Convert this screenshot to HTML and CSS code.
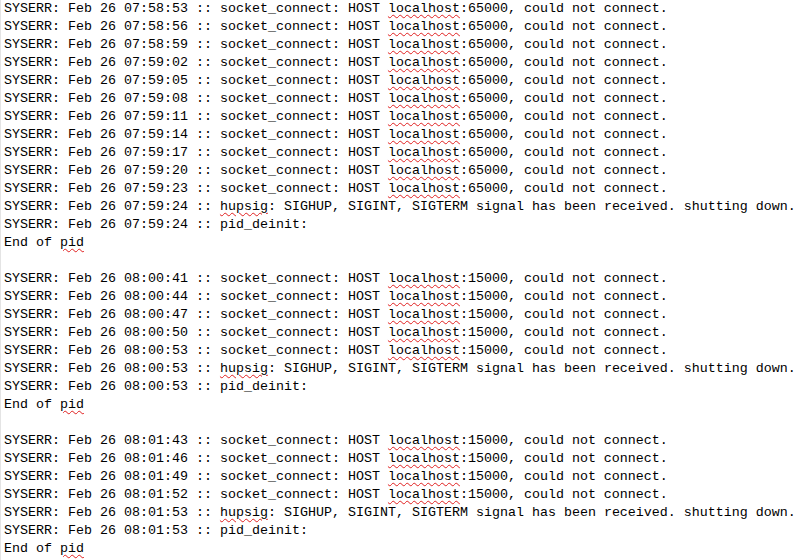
FILE: index.html
```html
<!DOCTYPE html>
<html>
<head>
<meta charset="utf-8">
<link rel="stylesheet" href="styles.css">
</head>
<body>
<pre class="log">SYSERR: Feb 26 07:58:53 :: socket_connect: HOST <span class="sp">localhost</span>:65000, could not connect.
SYSERR: Feb 26 07:58:56 :: socket_connect: HOST <span class="sp">localhost</span>:65000, could not connect.
SYSERR: Feb 26 07:58:59 :: socket_connect: HOST <span class="sp">localhost</span>:65000, could not connect.
SYSERR: Feb 26 07:59:02 :: socket_connect: HOST <span class="sp">localhost</span>:65000, could not connect.
SYSERR: Feb 26 07:59:05 :: socket_connect: HOST <span class="sp">localhost</span>:65000, could not connect.
SYSERR: Feb 26 07:59:08 :: socket_connect: HOST <span class="sp">localhost</span>:65000, could not connect.
SYSERR: Feb 26 07:59:11 :: socket_connect: HOST <span class="sp">localhost</span>:65000, could not connect.
SYSERR: Feb 26 07:59:14 :: socket_connect: HOST <span class="sp">localhost</span>:65000, could not connect.
SYSERR: Feb 26 07:59:17 :: socket_connect: HOST <span class="sp">localhost</span>:65000, could not connect.
SYSERR: Feb 26 07:59:20 :: socket_connect: HOST <span class="sp">localhost</span>:65000, could not connect.
SYSERR: Feb 26 07:59:23 :: socket_connect: HOST <span class="sp">localhost</span>:65000, could not connect.
SYSERR: Feb 26 07:59:24 :: <span class="sp">hupsig</span>: SIGHUP, SIGINT, SIGTERM signal has been received. shutting down.
SYSERR: Feb 26 07:59:24 :: pid_deinit:
End of <span class="sp">pid</span>

SYSERR: Feb 26 08:00:41 :: socket_connect: HOST <span class="sp">localhost</span>:15000, could not connect.
SYSERR: Feb 26 08:00:44 :: socket_connect: HOST <span class="sp">localhost</span>:15000, could not connect.
SYSERR: Feb 26 08:00:47 :: socket_connect: HOST <span class="sp">localhost</span>:15000, could not connect.
SYSERR: Feb 26 08:00:50 :: socket_connect: HOST <span class="sp">localhost</span>:15000, could not connect.
SYSERR: Feb 26 08:00:53 :: socket_connect: HOST <span class="sp">localhost</span>:15000, could not connect.
SYSERR: Feb 26 08:00:53 :: <span class="sp">hupsig</span>: SIGHUP, SIGINT, SIGTERM signal has been received. shutting down.
SYSERR: Feb 26 08:00:53 :: pid_deinit:
End of <span class="sp">pid</span>

SYSERR: Feb 26 08:01:43 :: socket_connect: HOST <span class="sp">localhost</span>:15000, could not connect.
SYSERR: Feb 26 08:01:46 :: socket_connect: HOST <span class="sp">localhost</span>:15000, could not connect.
SYSERR: Feb 26 08:01:49 :: socket_connect: HOST <span class="sp">localhost</span>:15000, could not connect.
SYSERR: Feb 26 08:01:52 :: socket_connect: HOST <span class="sp">localhost</span>:15000, could not connect.
SYSERR: Feb 26 08:01:53 :: <span class="sp">hupsig</span>: SIGHUP, SIGINT, SIGTERM signal has been received. shutting down.
SYSERR: Feb 26 08:01:53 :: pid_deinit:
End of <span class="sp">pid</span></pre>
</body>
</html>
```

FILE: styles.css
```css
html, body {
  margin: 0;
  padding: 0;
  background: #ffffff;
  height: 100%;
  overflow: hidden;
}

body {
  border-left: 1px solid #e4e4e4;
}

.log {
  margin: 0;
  padding: 0 0 0 3px;
  font-family: "Liberation Mono", "Courier New", monospace;
  font-size: 13.333px;
  line-height: 18px;
  color: #000000;
  white-space: pre;
}

.sp {
  text-decoration-line: underline;
  text-decoration-style: wavy;
  text-decoration-color: #e02020;
  text-decoration-thickness: 1px;
  text-underline-offset: 2px;
}
```
